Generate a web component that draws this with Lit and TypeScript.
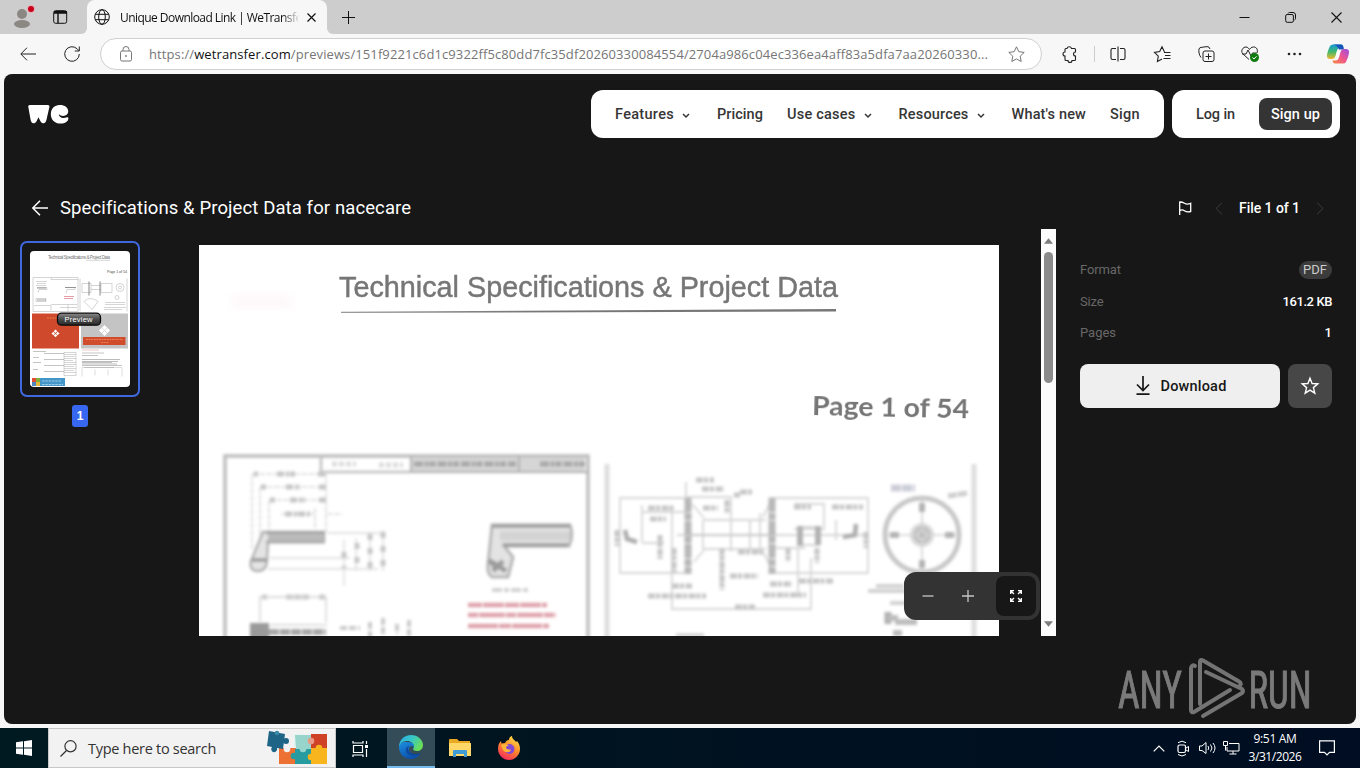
import { LitElement, html, svg, css } from "lit";
import { customElement, property } from "lit/decorators.js";

/* Single-line label that tracks its letters so the line has the requested width. */
@customElement("fit-text")
class FitText extends LitElement {
  static styles = css`
    :host { display: inline-block; white-space: nowrap; flex: none; }
  `;
  @property({ type: Number }) w = 0;
  render() {
    return html`<slot></slot>`;
  }
  firstUpdated() {
    const n = (this.textContent || "").length;
    const natural = this.getBoundingClientRect().width;
    if (this.w && n) this.style.letterSpacing = (this.w - natural) / n + "px";
  }
}

const icon = (w: number, h: number, body: unknown, cls = "") =>
  html`<svg class="ic ${cls}" width=${w} height=${h} viewBox="0 0 ${w} ${h}" fill="none" stroke="currentColor">${body}</svg>`;

const iconBase = css`
  .ic { display: block; flex: none; overflow: visible; }
`;

@customElement("browser-tabs")
class BrowserTabs extends LitElement {
  static styles = [iconBase, css`
    :host { display: flex; height: 34px; background: #f7f7f7; color: #111; font: 12px "Open Sans", "Noto Sans", sans-serif; }
    .left { width: 87px; display: flex; align-items: center; box-sizing: border-box; padding: 0 19px 0 12px; justify-content: space-between; background: #cdcdcd; border-bottom-right-radius: 6px; }
    .mid { display: flex; background: #cdcdcd; }
    .tab { width: 240px; background: #f7f7f7; border-radius: 8px 8px 0 0; display: flex; align-items: center; box-sizing: border-box; padding-left: 7px; }
    .strip { display: flex; flex: 1; background: #cdcdcd; border-bottom-left-radius: 6px; align-items: center; padding: 0 18px 0 15px; }
    .title { width: 178px; margin-left: 10px; overflow: hidden; -webkit-mask-image: linear-gradient(90deg, #000 162px, transparent 180px); }
    .close { margin-left: 9px; }
    .win { margin-left: auto; display: flex; gap: 35px; align-items: center; }
  `];
  render() {
    return html`
      <div class="left">
        ${icon(22, 24, svg`<g stroke="none"><circle cx="10" cy="9" r="5" fill="#8b8783"/><ellipse cx="10" cy="19" rx="8" ry="4" fill="#8b8783"/><circle cx="19" cy="4" r="3.8" fill="#eba8ae"/><circle cx="19" cy="4" r="3" fill="#c9001c"/></g>`)}
        ${icon(15, 14, svg`<rect x=".7" y=".7" width="13" height="12.6" rx="2"/><path d="M1 3h13M5 3v10" stroke-width="1.4"/><path d="M1 2h13" stroke-width="2"/>`)}
      </div>
      <div class="mid"><div class="tab">
        ${icon(16, 16, svg`<circle cx="8" cy="8" r="7.3"/><ellipse cx="8" cy="8" rx="3.3" ry="7.3"/><path d="M1.4 5.3h13.2M1.4 10.7h13.2"/>`)}
        <div class="title"><fit-text w="186">Unique Download Link | WeTransfer</fit-text></div>
        <div class="close">${icon(9, 9, svg`<path d="M.5.5l8 8M8.500.5l-8 8" stroke-width="1.2"/>`)}</div>
      </div></div>
      <div class="strip">
        ${icon(13, 13, svg`<path d="M6.500 0v13M0 6.500h13"/>`)}
        <div class="win">
          ${icon(11, 11, svg`<path d="M.5 5.500h10"/>`)}
          ${icon(11, 11, svg`<rect x=".7" y="2.500" width="7.700" height="7.800" rx="1.500"/><path d="M3 1.500q.5-1 1.500-1h3.500q2.500 0 2.500 2.500v3.500q0 1-1 1.500"/>`)}
          ${icon(11, 11, svg`<path d="M.5.5l10 10M10.500.5l-10 10" stroke-width="1.100"/>`)}
        </div>
      </div>`;
  }
}

@customElement("browser-toolbar")
class BrowserToolbar extends LitElement {
  static styles = [iconBase, css`
    :host { display: flex; height: 40px; background: #f7f7f7; align-items: center; color: #222; box-sizing: border-box; padding-left: 20px; font: 13px "Open Sans", "Noto Sans", sans-serif; }
    .reload { margin: 0 20px 0 28px; }
    .addr { box-sizing: border-box; width: 943px; height: 32px; border: 1px solid #d0d0d0; border-radius: 16px; background: #fff; display: flex; align-items: center; padding: 0 16px 0 19px; color: #767676; }
    .addr b { font-weight: 400; color: #111; }
    .url { margin-left: 17px; }
    .fav { margin-left: auto; }
    .tools { flex: 1; display: flex; align-items: center; padding-left: 6px; }
    .cell { width: 44px; display: flex; justify-content: center; }
    .sep { width: 1px; height: 16px; background: #ccc; margin: 0 1px 0 2px; }
  `];
  render() {
    const tools = [
      icon(16, 16, svg`<path d="M5 2.500A2.300 2.300 0 0 1 9.500 2.500H12.500Q13.500 2.500 13.500 3.500V6A2 2 0 0 0 13.500 10V13.500Q13.500 14.500 12.500 14.500H10A2 2 0 0 1 6 14.500H4Q3 14.500 3 13.500V10A2 2 0 1 1 3 6V3.500Q3 2.500 4 2.500Z" stroke-width="1.100"/>`),
      icon(16, 16, svg`<path d="M6 2.500H2.500Q1 2.500 1 4v8q0 1.500 1.500 1.500H6M10 2.500h3.500q1.500 0 1.500 1.500v8q0 1.500-1.500 1.500H10M8 .5v15" stroke-width="1.100"/>`),
      icon(17, 16, svg`<path d="M10.500 6L8 .8 5.700 5.600.5 6.400l3.800 3.800-.9 5.300L8 13M10 6.500h6.500M11 9.500h5.500M9.500 12.500h7" stroke-width="1.100"/>`),
      icon(17, 16, svg`<rect x="5" y="5" width="11" height="10.500" rx="2"/><path d="M10.500 7.500v6M7.500 10.500h6M3 11.500C1 9 .5 5 1 3Q1.500 1.500 3 1.400L9 .6Q11.500.5 12 3"/>`),
      icon(18, 16, svg`<path d="M8 13.500L1.500 7.500C-.5 4.500 2 1 5 1c2 0 3 2 3.500 2.500C9 3 10 1 12.500 1 16 1 17 4 16 7M1 8h4l2-4 3 6 1.500-3h4"/><circle cx="13.500" cy="11.500" r="4.500" fill="#107c10" stroke="none"/><path d="M11.500 11.500l1.500 1.500 2.500-2.700" stroke="#fff"/>`),
      icon(14, 4, svg`<g fill="currentColor" stroke="none"><circle cx="2" cy="2" r="1.300"/><circle cx="7.500" cy="2" r="1.300"/><circle cx="13" cy="2" r="1.300"/></g>`),
      icon(22, 20, svg`
          <defs>
            <linearGradient id="c1" x1="0" y1="0" x2="0" y2="1"><stop offset="0" stop-color="#159bd8"/><stop offset=".5" stop-color="#42b96c"/><stop offset="1" stop-color="#f0b92c"/></linearGradient>
            <linearGradient id="c2" x1="1" y1="0" x2="0" y2="1"><stop offset="0" stop-color="#9b4fe0"/><stop offset=".5" stop-color="#ee5590"/><stop offset="1" stop-color="#f98a3c"/></linearGradient>
          </defs>
          <g stroke="none"><path d="M6 .5h8q2 0 2.500 3H13q-2 0-3 3L8.500 12q-1 3-3.500 3H3Q0 15 0 12c0-3 2-8 3-10Q4 .5 6 .5z" fill="url(#c1)"/><path d="M6 .5h8q2 0 2.500 3l.5 2h-5Q10 1 6 .5z" fill="#1755bb"/><path d="M16 19.500H8q-2 0-2.500-3H9q2 0 3-3L13.500 8q1-3 3.500-3h2q3 0 3 3c0 3-2 8-3 10q-1 1.500-3 1.500z" fill="url(#c2)"/><path d="M10 7.500h3L11.500 13H8.500z" fill="#fff" opacity=".85"/></g>`),
    ];
    return html`
      ${icon(16, 14, svg`<path d="M16 7H1M7 .7L.8 7 7 13.300"/>`)}
      <div class="reload">${icon(16, 16, svg`<path d="M15.300 8A7.300 7.300 0 1 1 13 2.700L15 4.700M15.300.5v4.500h-4.500"/>`)}</div>
      <div class="addr">
        ${icon(12, 16, svg`<rect x=".5" y="5" width="11" height="10" rx="1.500"/><path d="M3 5V3.500a3 3 0 0 1 6 0V5"/><circle cx="6" cy="10" r=".6"/>`)}
        <div class="url"><fit-text w="839">https://<b>wetransfer.com</b>/previews/151f9221c6d1c9322ff5c80dd7fc35df20260330084554/2704a986c04ec336ea4aff83a5dfa7aa20260330...</fit-text></div>
        <div class="fav">${icon(17, 16, svg`<path d="M8.500.8l2.300 4.900 5.400.7-4 3.800 1 5.300-4.700-2.600-4.700 2.600 1-5.300-4-3.800 5.400-.7z"/>`)}</div>
      </div>
      <div class="tools">
        ${tools.map((t, i) => html`<span class="cell">${t}</span>${i === 0 ? html`<span class="sep"></span>` : ""}`)}
      </div>`;
  }
}

@customElement("site-header")
class SiteHeader extends LitElement {
  static styles = [iconBase, css`
    :host { display: flex; height: 48px; padding: 16px 16px 0 24px; align-items: center; gap: 8px; color: #363636; font: 500 14.500px Roboto, sans-serif; }
    .logo { margin-right: auto; }
    .pill { background: #fff; border-radius: 12px; height: 48px; display: flex; align-items: center; box-sizing: border-box; padding: 0 24px; gap: 24px; }
    .item { display: flex; align-items: center; justify-content: space-between; }
    .item .ic { margin-top: 3px; margin-left: 8px; margin-right: 3px; }
    .auth { padding-right: 8px; }
    .up { background: #343434; color: #fff; border-radius: 8px; height: 32px; width: 73px; display: flex; align-items: center; justify-content: center; }
  `];
  render() {
    const items: [string, number, boolean][] = [
      ["Features", 59, true], ["Pricing", 46, false], ["Use cases", 68.500, true],
      ["Resources", 70, true], ["What's new", 74.500, false], ["Sign", 30, false],
    ];
    return html`
      <div class="logo"><svg class="ic" width="41" height="20" viewBox="0 -.5 42 20.500">
        <path fill="#fff" d="M2 .5C.6.500.1 1.300.3 2.600L2.600 15.500C3 18 4 19.300 5.600 19.300c1.400 0 2.400-.8 3.300-2.500L10.700 13l1.900 3.800c.9 1.700 1.900 2.500 3.300 2.500 1.600 0 2.600-1.300 3.100-3.800L21.900 2.500C22.200 1.200 21.500.5 20.200.5z"/>
        <path fill="#fff" d="M32.500.4c5.300 0 8.700 2.600 8.700 6.500 0 3-2.400 4.800-5.200 4.800-1.900 0-3.200-.7-3.900-1.400-.3-.3-.6-.1-.5.3.4 1.900 2.200 3.300 4.600 3.300 1.500 0 2.700-.4 3.700-.8 1-.4 1.500.1 1.500 1 0 3.200-3.400 5.400-8 5.400-6 0-10-3.900-10-9.600S27 .4 32.500.4z"/></svg></div>
      <div class="pill">
        ${items.map(([t, w, more]) => html`<div class="item"><fit-text w=${w}>${t}</fit-text>${more ? icon(8, 6, svg`<path d="M1 1l3 3 3-3" stroke-width="1.500"/>`) : ""}</div>`)}
      </div>
      <div class="pill auth">
        <fit-text w="39">Log in</fit-text>
        <div class="up"><fit-text w="49">Sign up</fit-text></div>
      </div>`;
  }
}

@customElement("page-thumb")
class PageThumb extends LitElement {
  static styles = css`
    :host { display: flex; flex-direction: column; align-items: center; gap: 8px; width: 120px; }
    .frame { width: 120px; height: 156px; box-sizing: border-box; border: 2px solid #4068de; border-radius: 7px; display: flex; align-items: center; justify-content: center; }
    .num { width: 16px; height: 22px; border-radius: 3px; background: #3767f0; color: #fff; font: 700 12px/22px "Liberation Sans", sans-serif; text-align: center; }
    text { font-family: "Liberation Sans", sans-serif; }
  `;
  render() {
    return html`
      <div class="frame">
        <svg width="100" height="136" viewBox="30 250.500 100 136">
          <defs>
            <linearGradient id="bt" x1="0" y1="0" x2="0" y2="1"><stop stop-color="#8b8b8b"/><stop offset=".5" stop-color="#4b4b4b"/><stop offset="1" stop-color="#292929"/></linearGradient>
            <filter id="tb"><feGaussianBlur stdDeviation=".4"/></filter>
          </defs>
          <rect x="30" y="250.500" width="100" height="136" rx="4" fill="#fff"/>
          <text x="48" y="258.500" font-size="4.500" fill="#777" textLength="62">Technical Specifications &amp; Project Data</text>
          <path d="M86 259.800h24" stroke="#aaa" stroke-width=".5"/>
          <text x="107" y="272.500" font-size="3.800" fill="#555" textLength="20">Page 1 of 54</text>
          <g filter="url(#tb)">
          <g fill="none" stroke="#b9b9b9" stroke-width=".6">
            <path d="M33 277h45v34H33zM51 277v2h27M80 278v33M127 278v33M36 281h11M37 283h9M36 285h10"/>
            <path d="M37 287h10v2H39l-1 3M65 287h10v2h-8l-1 4M36 298h10v3H36zM34 305h17v5M51 304h26M60 307h17M68 304v7M82 283h9v9h-9zM89 281v14M91 285h10M91 289h10M100 281v14M101 283h11v9h-11zM84 301q6-6 14 0l-6 8zM105 302h20M105 304h20M104 307h22M104 309h18"/>
            <circle cx="120" cy="287" r="4"/><circle cx="120" cy="287" r="1.500"/><circle cx="117" cy="297" r="2"/>
          </g>
          <path d="M37 287.500h9M65 287h11M37 299.500h9M89 281v14M100 281v14" stroke="#777" stroke-width="1" opacity=".7"/>
          <path d="M64 296h10M64 298h9" stroke="#e59ca6"/></g>
          <rect x="32" y="313" width="47" height="35" fill="#cf4a2c"/>
          <rect x="81" y="313" width="47" height="35" fill="#c4c4c4"/>
          <rect x="83" y="336.500" width="42.500" height="8" fill="#d14b2d"/>
          <path d="M47 317.500h14M86 339h37M101 342h8" stroke="#f08a5a" stroke-width=".8" stroke-dasharray="2 .6"/>
          <g fill="#fff"><path d="M55.500 329l1.800 1.800-1.800 1.800-1.800-1.800zM55.500 333.200l1.800 1.800-1.800 1.800-1.800-1.800zM53.300 331.200l1.700 1.800-1.700 1.800-1.800-1.800zM57.700 331.200l1.800 1.800-1.800 1.800-1.700-1.800z"/><path d="M104.500 324.500l5.500 5.500-5.500 5.500L99 330z"/></g><path d="M102 327.500l5 5M107 327.500l-5 5" stroke="#c4c4c4" stroke-width=".6"/>
          <g stroke="#888" stroke-width=".5" fill="none" filter="url(#tb)"><path d="M33 351h13M33 357h6M33 362h8M33 369h5M44 353h20M44 359h20M44 365h20M44 371h20M82 352.500h22M82 355h16M82 362h30M82 365h40M84 367h30"/><path d="M64 352h12v23H64zM64 354h12M64 356h11M64 358h12M64 360h9M64 362h12M64 364h12M64 366h10M64 368h12M64 370h10M64 372h12" stroke="#aaa"/><path d="M82 349.500h17" stroke="#d88"/><path d="M82 359h38M82 361h36M82 363.500h35" stroke="#777"/><path d="M82 376v-9h40v9M95 369v6M108 369v6" stroke="#bbb"/></g>
          <rect x="32" y="377.500" width="33" height="8" fill="#4396c9"/><path fill="#e34d35" d="M32 377.500h4v4h-4z"/><path fill="#7fb23c" d="M36 377.500h4v4h-4z"/><path fill="#5085bd" d="M32 381.500h4v4h-4z"/><path fill="#e6b83a" d="M36 381.500h4v4h-4z"/><path d="M42 380.500h19M42 384h21" stroke="#b9dcee" stroke-width=".8" stroke-dasharray="2.500 .8"/>
          <rect x="57.500" y="312.700" width="43" height="12" rx="4" fill="url(#bt)" stroke="#0a0a0a" stroke-width="1.300"/>
          <text x="64.500" y="321.400" font-size="7.500" fill="#fff" textLength="28">Preview</text>
        </svg>
      </div>
      <div class="num">1</div>`;
  }
}

@customElement("document-page")
class DocumentPage extends LitElement {
  static styles = css`
    :host { display: block; width: 800px; height: 391px; background: #fff; overflow: hidden; }
    svg { display: block; }
    .head { font-family: "Liberation Sans", sans-serif; }
    .pno { font-family: Lato, sans-serif; font-weight: 700; }
  `;
  render() {
    return html`
      <svg width="800" height="391" viewBox="199 245 800 391" fill="none">
        <defs>
          <filter id="soft" x="-5%" y="-5%" width="110%" height="110%"><feGaussianBlur stdDeviation="1.800"/></filter>
          <filter id="bit"><feGaussianBlur stdDeviation=".45"/></filter>
          <filter id="wide"><feGaussianBlur stdDeviation="5"/></filter>
          <linearGradient id="rule" x1="341" x2="836" y1="0" y2="0" gradientUnits="userSpaceOnUse"><stop stop-color="#999"/><stop offset=".4" stop-color="#777"/><stop offset="1" stop-color="#777"/></linearGradient>
        </defs>
        <path d="M232 294h60v15h-60z" fill="#fdf8fb" filter="url(#wide)"/>
        <g filter="url(#bit)">
          <text class="head" x="339" y="296.500" font-size="29.500" fill="#767676" stroke="#767676" stroke-width=".45" textLength="499" lengthAdjust="spacingAndGlyphs">Technical Specifications &amp; Project Data</text>
          <path d="M341 311.800L836 309v2.600L341 313z" fill="url(#rule)"/>
          <text class="pno" x="812" y="414.500" font-size="27" fill="#767676" textLength="157" lengthAdjust="spacingAndGlyphs" transform="rotate(1.200 812 414)">Page 1 of 54</text>
        </g>
        <g filter="url(#soft)">
          <path d="M225 640V456H588V640" stroke="#bdbdbd" stroke-width="3.500"/>
          <path d="M321 456v16h90" stroke="#c0c0c0" stroke-width="2.500"/>
          <rect x="411" y="458" width="174" height="14" fill="#d6d6d6"/>
          <path d="M414 464h102M540 464h46" stroke="#a6a6a6" stroke-width="5" stroke-dasharray="9 1.500 4 1 6 2"/>
          <path d="M411 472h177M411 456v16M519 456v16" stroke="#b0b0b0" stroke-width="2"/>
          <path d="M332 464h24M379 465h24" stroke="#dcdcdc" stroke-width="5" stroke-dasharray="5 2"/>
          <path d="M252 474v75M260 487v50M269 500v35M326 472v60M315 508v20M252 474h75M260 487h66M269 500h57M281 514h33M327 514h15" stroke="#dcdcdc" stroke-width="1.600" stroke-dasharray="6 1"/>
          <path d="M277 474h18M286 487h14M290 500h15M285 514h25M254 474h4M318 474h8M261 487h5M319 487h7M270 500h5M319 500h7" stroke="#c5c5c5" stroke-width="5" stroke-dasharray="7 2 3 1"/>
          <path d="M263 532h61v10h-56l-1 17q0 12-9 12t-7-10z" fill="#e4e4e4" stroke="#b0b0b0" stroke-width="2.400"/>
          <path d="M266 533h58M266 542h58" stroke="#a0a0a0" stroke-width="2.500"/><path d="M268 538h56" stroke="#bababa" stroke-width="7"/>
          <path d="M252 560h15" stroke="#a2a2a2" stroke-width="4"/>
          <path d="M327 533h54M270 558h80M268 569h110M344 540v46M356 538v33M370 533v38M383 530v41" stroke="#e3e3e3" stroke-width="1.800"/>
          <path d="M357 543v25M370 534v35M383 532v39M344 552v16" stroke="#c6c6c6" stroke-width="5" stroke-dasharray="6 8"/>
          <path d="M260 596v26M326 596v26M260 597h66" stroke="#dcdcdc" stroke-width="1.800"/><path d="M286 597h24M262 597h5M319 597h6" stroke="#cecece" stroke-width="5" stroke-dasharray="7 1"/>
          <path d="M250 623h19v17h-19z" fill="#9a9a9a"/><path d="M269 632h57" stroke="#a8a8a8" stroke-width="6" stroke-dasharray="10 1"/><path d="M270 625h57" stroke="#ddd" stroke-width="2"/>
          <path d="M340 628h20M370 622v18M383 618v18M397 624v10M409 620v16" stroke="#cbcbcb" stroke-width="4" stroke-dasharray="7 2"/>
          <path d="M492 525h78q4 10-1 21h-65l9 11-5 20h-16q-5-3-4-12z" fill="#e3e3e3" stroke="#b6b6b6" stroke-width="3"/>
          <path d="M492 526h78" stroke="#a2a2a2" stroke-width="4"/><path d="M503 545h65" stroke="#a2a2a2" stroke-width="4"/><path d="M492 562l14 9M493 571l10-10M489 560l6 6" stroke="#9b9b9b" stroke-width="5"/><path d="M500 536h70" stroke="#d3d3d3" stroke-width="9"/>
          <path d="M492 590h37" stroke="#d2d2d2" stroke-width="4" stroke-dasharray="10 2 5 2"/>
          <g stroke="#dfa3ab" stroke-width="4.500"><path d="M468 605h79" stroke-dasharray="14 1 21 1"/><path d="M468 615h88" stroke-dasharray="10 1 26 1"/><path d="M468 626h81" stroke-dasharray="30 1 12 1"/></g>
          <path d="M607 464v180M974 464v180" stroke="#dedede" stroke-width="5"/>
          <g stroke="#d6d6d6" stroke-width="1.800">
            <path d="M620 498h68v75h-68zM770 498h98v75h-98zM642 505v37M672 512v97M686 482v15h45v22M703 520h63M703 549h63M703 520v29M731 500v52M721 549v38M770 548h35M671 609h140v-51M798 549v48M750 520v30M760 513v40M704 518l-12-14M704 550l-10 12M763 517l9-18M763 552l7 13M677 535h190M642 512h44M642 543h22"/>
            <path d="M794 504h30v25h-30M801 527h18v18h-18zM836 520v20"/>
          </g>
          <path d="M688 498v76M772 498v76" stroke="#b8b8b8" stroke-width="7" stroke-dasharray="14 1 7 1"/><path d="M800 526v20M818 526v19" stroke="#b2b2b2" stroke-width="6"/><path d="M689 535h82" stroke="#c0c0c0" stroke-width="1.500"/>
          <path d="M648 508h27M650 519h16M703 508h15M794 507h17M832 507h31M734 495h6M740 492h12M696 480h18M702 489h22M672 586h20M648 596h58M730 576h28M770 584h22M799 581h34M735 607h20M763 595h43M738 552h25M660 535v24M674 548v24M788 548v14M817 548v15M617 530v16M866 532v16M722 548v42M727 500v14" stroke="#c6c6c6" stroke-width="5" stroke-dasharray="7 1 4 1.500"/>
          <path d="M625 530l2 9 10 3M856 524l-1 11-12 2" stroke="#adadad" stroke-width="4.500"/>
          <circle cx="922" cy="535" r="37" stroke="#c8c8c8" stroke-width="5"/>
          <circle cx="922" cy="535" r="12" fill="#dadada"/><circle cx="922" cy="535" r="7" stroke="#bcbcbc" stroke-width="3"/><circle cx="922" cy="535" r="3" fill="#959595"/>
          <path d="M922 500v70M887 535h70" stroke="#d2d2d2" stroke-width="1.600"/><path d="M922 503v9M922 560v8M890 535h9M945 535h9" stroke="#b4b4b4" stroke-width="6"/>
          <path d="M891 488h24" stroke="#cdcdd9" stroke-width="7" stroke-dasharray="10 1"/><path d="M948 496l20-3" stroke="#cdcdcd" stroke-width="5" stroke-dasharray="9 1"/>
          <path d="M868 591h38M876 586h28M890 603h16" stroke="#d2d2d2" stroke-width="4"/><path d="M888 612v12" stroke="#b0b0b0" stroke-width="7"/><path d="M895 622h22M888 618h10M893 633h9" stroke="#bdbdbd" stroke-width="6"/><path d="M676 635h28" stroke="#ccc" stroke-width="3"/>
        </g>
        <path d="M199 432h70" stroke="#f3f3f3" filter="url(#bit)"/>
      </svg>`;
  }
}

@customElement("preview-screen")
class PreviewScreen extends LitElement {
  static styles = [iconBase, css`
    :host { display: flex; flex-direction: column; position: relative; height: 650px; margin: 0 4px 4px; background: #171717; border-radius: 8px; overflow: hidden; color: #fff; font: 14px Roboto, sans-serif; }
    .bar { display: flex; align-items: center; height: 42px; margin-top: 49px; padding: 0 32px 0 28px; }
    .name { font-size: 18.500px; margin-left: 12px; }
    .pager { margin-left: auto; display: flex; align-items: center; font-weight: 500; }
    .pager .flag { margin-right: 23px; }
    .pager fit-text { margin: 0 16px 0 16px; }
    .dim { color: #3c3c3c; }
    .body { display: flex; height: 407px; }
    .side { width: 156px; padding: 12px 0 0 16px; box-sizing: border-box; }
    .view { width: 896px; display: flex; justify-content: flex-end; position: relative; }
    .doc { padding: 16px 42px 0 0; }
    .scroll { width: 15px; background: #fcfcfc; display: flex; flex-direction: column; align-items: center; justify-content: space-between; padding: 9px 0; box-sizing: border-box; }
    .track { flex: 1; width: 9px; padding-top: 8px; }
    .thumb { height: 131px; border-radius: 5px; background: #8b8b8b; }
    .zoom { position: absolute; right: 16px; bottom: 16px; width: 136px; height: 48px; background: #333; border-radius: 12px; display: flex; align-items: center; box-sizing: border-box; padding: 4px 4px 4px 18px; color: #c6c6c6; }
    .zoom .plus { margin: 0 22px 0 28px; }
    .full { width: 40px; height: 40px; border-radius: 8px; background: #171717; display: flex; align-items: center; justify-content: center; color: #fff; }
    .info { flex: 1; padding: 25px 24px 0; display: flex; flex-direction: column; }
    .row { display: flex; justify-content: space-between; align-items: center; height: 31.500px; font-size: 13px; color: #686868; }
    .row .val { color: #fff; font-weight: 500; }
    .row .tag { background: #3c3c3c; color: #ccc; border-radius: 9px; padding: 0 5px 0 4px; height: 18px; line-height: 18px; font-weight: 400; }
    .acts { display: flex; gap: 8px; margin-top: 15px; }
    .dl { width: 200px; height: 44px; border-radius: 8px; background: #efefef; color: #171717; display: flex; align-items: center; justify-content: center; gap: 10px; font-weight: 500; font-size: 14.500px; padding: 1px 0 0 1px; box-sizing: border-box; }
    .star { width: 44px; height: 44px; border-radius: 8px; background: #474747; display: flex; align-items: center; justify-content: center; }
    .mark { position: absolute; left: 1113px; top: 582px; opacity: .68; }
    .mark text { font-family: "Roboto Condensed", Roboto, sans-serif; }
  `];
  render() {
    return html`
      <site-header></site-header>
      <div class="bar">
        ${icon(16, 16, svg`<path d="M16 8H1M8 .7L.8 8 8 15.300" stroke-width="1.500"/>`)}
        <fit-text class="name" w="350.500">Specifications &amp; Project Data for nacecare</fit-text>
        <div class="pager">
          <span class="flag">${icon(14, 14, svg`<path d="M1.700 14V1Q4 .8 6.500 2.300T12.700 2.300V10.500Q9 11.500 6.500 9.800T2 9.500" stroke-width="1.300"/>`)}</span>
          <span class="dim">${icon(8, 13, svg`<path d="M7 .7L1 6.500l6 5.800"/>`)}</span>
          <fit-text w="61">File 1 of 1</fit-text>
          <span class="dim">${icon(8, 13, svg`<path d="M1 .7l6 5.800-6 5.800"/>`)}</span>
        </div>
      </div>
      <div class="body">
        <div class="side"><page-thumb></page-thumb></div>
        <div class="view">
          <div class="doc"><document-page></document-page></div>
          <div class="scroll">
            ${icon(9, 6, svg`<path d="M4.500 .3L9 5.700H0z" fill="#7d7d7d" stroke="none"/>`)}
            <div class="track"><div class="thumb"></div></div>
            ${icon(9, 6, svg`<path d="M0 .3h9L4.500 5.700z" fill="#7d7d7d" stroke="none"/>`)}
          </div>
          <div class="zoom">
            ${icon(12, 12, svg`<path d="M.5 6h11" stroke-width="1.300"/>`)}
            <span class="plus">${icon(12, 12, svg`<path d="M0 6h12M6 0v12" stroke-width="1.300"/>`)}</span>
            <span class="full">${icon(12, 12, svg`<path d="M4 .7H.7V4M.7 .7l3.300 3.300M8 .7h3.300V4M11.300 .7L8 4M4 11.300H.7V8M.7 11.300L4 8M8 11.300h3.300V8M11.300 11.300L8 8" stroke-width="1.300"/>`)}</span>
          </div>
        </div>
        <div class="info">
          <div class="row"><fit-text w="41">Format</fit-text><span class="val tag"><fit-text w="24">PDF</fit-text></span></div>
          <div class="row"><fit-text w="23.500">Size</fit-text><fit-text class="val" w="49.500">161.2 KB</fit-text></div>
          <div class="row"><fit-text w="36">Pages</fit-text><span class="val">1</span></div>
          <div class="acts">
            <div class="dl">${icon(16, 20, svg`<path d="M8 0v14M2 8.500l6 6 6-6M1.500 18.200h13" stroke-width="1.700"/>`)}<fit-text w="66">Download</fit-text></div>
            <div class="star">${icon(18, 18, svg`<path d="M9 1.200l2.100 5.300 5.700.4-4.400 3.700 1.400 5.600L9 13.100l-4.800 3.100 1.400-5.600L1.200 6.900l5.700-.4z" stroke-width="1.400"/>`)}</div>
          </div>
        </div>
      </div>
      <svg class="mark" width="196" height="64" viewBox="0 0 196 64">
        <text transform="translate(1 51.500) scale(.78 1.280)" font-size="41" fill="#aaa" stroke="#aaa" stroke-width=".8" textLength="82" lengthAdjust="spacingAndGlyphs">ANY</text>
        <text transform="translate(131.500 51.500) scale(.78 1.280)" font-size="41" fill="#aaa" stroke="#aaa" stroke-width=".8" textLength="81" lengthAdjust="spacingAndGlyphs">RUN</text>
        <g fill="none" stroke="#a0a0a0" stroke-width="4" stroke-linejoin="round" stroke-linecap="round">
          <path d="M78 10q-3-2-4 2v42q0 3 3 2l36-22"/><path d="M83 48V6q0-3 3-1.500l36 21q3 2 1 4"/><path d="M89 16l36 17q2 2 0 4L86 60"/>
        </g>
      </svg>`;
  }
}

@customElement("task-bar")
class TaskBar extends LitElement {
  static styles = [iconBase, css`
    :host { display: flex; height: 40px; background: linear-gradient(90deg, #001a22 0, #001420 40%, #000d22 100%); color: #fff; font: 12px "Open Sans", "Noto Sans", sans-serif; align-items: center; }
    .start { width: 48px; display: flex; justify-content: center; }
    .search { width: 288px; height: 40px; box-sizing: border-box; border: 1px solid #c8c8c8; background: #f2f2f2; color: #333; display: flex; align-items: center; padding-left: 11px; font-size: 14.500px; }
    .search fit-text { margin-left: 11px; }
    .search .art { margin-left: auto; margin-right: 7px; }
    .cell { width: 48px; height: 40px; display: flex; align-items: center; justify-content: center; box-sizing: border-box; margin-left: 1px; }
    .view { margin-left: 0; }
    .on { background: #344c57; border-bottom: 2px solid #76b9ed; margin-left: 3px; }
    .tray { margin-left: auto; display: flex; align-items: center; padding-right: 25px; }
    .clock { width: 62px; margin: 0 13px 0 4px; display: flex; flex-direction: column; align-items: center; line-height: 18px; }
    .g { margin-right: 7px; }
    .g.first { margin-right: 9px; }
  `];
  render() {
    return html`
      <div class="start">${icon(16, 16, svg`<path stroke="none" fill="#fff" d="M0 2.300L7 1.300V7.500H0zM8 1.200L16 0V7.500H8zM0 8.500H7V14.700L0 13.700zM8 8.500H16V16L8 14.800z"/>`)}</div>
      <div class="search">
        ${icon(17, 17, svg`<circle cx="10.500" cy="6.300" r="5.600" stroke-width="1.200"/><path d="M6.500 10.500L.5 16.500" stroke-width="1.300"/>`)}
        <fit-text w="128">Type here to search</fit-text>
        <div class="art">${icon(62, 36, svg`<g stroke="none">
          <path fill="#ed7132" d="M13 18h17v16H13z"/><path fill="#e5f4f0" d="M28 4h10v13H28z"/><path fill="#97d4cb" d="M29 5h16v14H30z"/><path fill="#cf4226" d="M45 4h16v15H45z"/><path fill="#279ca0" d="M29 19h16v15H29z"/><path fill="#f8b51d" d="M45 18h16v16H45z"/>
          <circle cx="37" cy="19" r="3.300" fill="#97d4cb"/><circle cx="45" cy="11" r="3.300" fill="#e99a87"/><circle cx="53" cy="18" r="3.300" fill="#f8b51d"/><circle cx="45" cy="27" r="3.300" fill="#f8b51d"/><circle cx="28" cy="26" r="3.300" fill="#279ca0"/><circle cx="21" cy="19" r="3.300" fill="#f2f2f2"/>
          <path fill="#1e6486" d="M3 1l16 3-2 15-6-1a3 3 0 1 1-5-1l-5-1z"/><circle cx="20" cy="11" r="3" fill="#1e6486"/><circle cx="11" cy="3" r="2.300" fill="#3c8ba6"/></g>`)}</div>
      </div>
      <div class="cell view">${icon(17, 17, svg`<path d="M1 1v2h10V1M1.500 5.500h9v7h-9zM1 17v-2h10v2M14.500 1v3M14.500 9v8" stroke-width="1.200"/><path d="M13 5h3v3h-3z" fill="#fff" stroke="none"/>`)}</div>
      <div class="cell on">${icon(24, 24, svg`
        <defs><linearGradient id="e1" x1="0" y1="0" x2="1" y2=".5"><stop stop-color="#27a9e8"/><stop offset=".55" stop-color="#39c8c4"/><stop offset="1" stop-color="#69dd59"/></linearGradient><linearGradient id="e2" x1="0" y1="0" x2=".5" y2="1"><stop stop-color="#1c8fdf"/><stop offset="1" stop-color="#0b4eaa"/></linearGradient></defs>
        <g stroke="none"><path fill="url(#e2)" d="M0 12C0 7 5 7 9 7c5 0 8 3 8 6h-2c-2-4-6-1-5 2 1 4 7 6 12 3C19 22 16 24 12 24 5 24 0 19 0 12z"/><path fill="url(#e1)" d="M0 12C0 5 5 0 12 0c7 0 12 5 12 10 0 4-3 6-6 6-2 0-4-1-4-2 2-2 1-6-3-7.500C7 5 1 7 0 12z"/><path fill="#093f91" opacity=".75" d="M10 11c-3 5 2 10 12 7-6 4-16 3-15-4 .3-1.500 1.500-2.500 3-3z"/></g>`)}</div>
      <div class="cell">${icon(22, 18, svg`<g stroke="none"><path fill="#e9a922" d="M0 1q0-1 1-1h7l2 2h11v14H0z"/><path fill="#ffd868" d="M0 4h22v13H0z"/><path fill="#419cd5" d="M4 18v-6q0-1 1-1h12q1 0 1 1v6h-3v-3H7v3z"/></g>`)}</div>
      <div class="cell">${icon(24, 24, svg`
        <defs><linearGradient id="f1" x1=".8" y1="0" x2=".3" y2="1"><stop stop-color="#ffe34d"/><stop offset=".5" stop-color="#ff8a2a"/><stop offset="1" stop-color="#f5275e"/></linearGradient></defs>
        <g stroke="none"><path fill="url(#f1)" d="M1 13c0-4 1-6 3-8l.5 2.500L8 7c1-2 2-3 4-3 0-2 1-3.500 3-4 0 3 3 4 4 6l1-1c2 2 3 5 3 8 0 6-5 11-11 11S1 19 1 13z"/><circle cx="12.500" cy="13" r="5" fill="#8149d4"/><path fill="#ffb43a" d="M4 9c3-2 6-1 8 .5-2 0-3 1-3 2.500 1 2 4 1 5 2-1 3-6 3-8 0z"/></g>`)}</div>
      <div class="tray">
        <span class="g first">${icon(12, 7, svg`<path d="M.7 6.300L6 1l5.300 5.300" stroke-width="1.200"/>`)}</span>
        <span class="g">${icon(18, 16, svg`<rect x="4" y="5" width="7.500" height="7.500" rx="1.500" stroke-width="1.200"/><path d="M12 8l2.500-1.500v5L12 10M4 2.700q4-3 8 0M4 14.500q4 3 8 0"/>`)}</span>
        <span class="g">${icon(17, 14, svg`<path d="M.5 5h2.500l4-3.500v11L3 9.500H.5zM9 5q1.500 2 0 4M11.500 3.500q3 3.500 0 7M14 2q4 5 0 10"/>`)}</span>
        <span>${icon(17, 14, svg`<path d="M6 2.500h10v7.500H4V6M10 10v3M6.500 13h7M.5.5h4v4h-4zM2.500 4.500v5"/>`)}</span>
        <div class="clock"><fit-text w="43">9:51 AM</fit-text><fit-text w="53">3/31/2026</fit-text></div>
        ${icon(16, 16, svg`<path d="M.6.8h14.800v11.500H10.500L8 14.800 5.500 12.300H.6z" stroke-width="1.200"/>`)}
      </div>`;
  }
}

@customElement("app-root")
class AppRoot extends LitElement {
  static styles = css`
    :host { display: flex; flex-direction: column; width: 1360px; height: 768px; overflow: hidden; background: #f7f7f7; }
  `;
  render() {
    return html`
      <browser-tabs></browser-tabs>
      <browser-toolbar></browser-toolbar>
      <preview-screen></preview-screen>
      <task-bar></task-bar>`;
  }
}
